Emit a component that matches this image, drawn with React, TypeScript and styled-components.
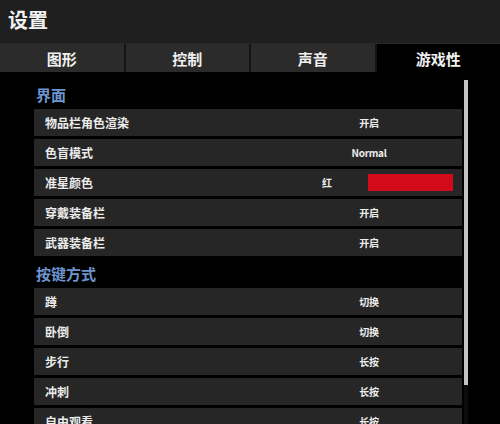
import React from "react";
import styled, { createGlobalStyle } from "styled-components";

const GlobalStyle = createGlobalStyle`
    html, body {
        margin: 0;
        padding: 0;
        background: #000000;
        overflow: hidden;
    }
    body {
        font-family: "Noto Sans CJK SC", "Liberation Sans", sans-serif;
    }
`;

const Page = styled.div`
    width: 500px;
    height: 424px;
    display: flex;
    flex-direction: column;
    background: #000000;
    overflow: hidden;
`;

const Header = styled.div`
    height: 43px;
    flex-shrink: 0;
    display: flex;
    align-items: center;
    padding: 0 0 4px 8px;
    background: #1f1f1f;
    color: #f2f2f2;
    font-size: 20px;
    font-weight: bold;
    box-sizing: border-box;
`;

const TabBar = styled.div`
    display: flex;
    flex-shrink: 0;
    height: 29px;
    background: #1f1f1f;
    border-top: 1px solid #2a2a2a;
    box-sizing: border-box;
`;

const Tab = styled.div<{ $active?: boolean }>`
    flex: 1;
    display: flex;
    align-items: center;
    justify-content: center;
    font-size: 15px;
    font-weight: bold;
    color: #f0f0f0;
    background: ${(p) => (p.$active ? "#000000" : "#2b2b2b")};
    border-right: 2px solid ${(p) => (p.$active ? "transparent" : "#141414")};
    &:last-child {
        border-right: none;
    }
`;

const Body = styled.div`
    flex: 1;
    min-height: 0;
    display: flex;
    align-items: flex-start;
    padding: 8px 0 0 34px;
    gap: 2px;
    overflow: hidden;
`;

const List = styled.div`
    width: 428px;
    display: flex;
    flex-direction: column;
`;

const SectionTitle = styled.div`
    height: 29px;
    flex-shrink: 0;
    display: flex;
    align-items: center;
    padding-left: 2px;
    font-size: 15px;
    font-weight: bold;
    color: #6f95cf;
`;

const Row = styled.div`
    height: 27px;
    margin-bottom: 3px;
    display: flex;
    align-items: center;
    background: #262626;
    padding-left: 11px;
    color: #ececec;
    flex-shrink: 0;
`;

const Label = styled.div`
    flex: 1;
    font-size: 12px;
    font-weight: bold;
`;

const Value = styled.div`
    width: 186px;
    text-align: center;
    font-size: 10px;
    font-weight: bold;
    letter-spacing: -0.3px;
`;

const ColorValue = styled.div`
    width: 186px;
    display: flex;
    align-items: center;
    font-size: 10px;
    font-weight: bold;
`;

const ColorName = styled.span`
    width: 80px;
    margin-left: 11px;
    text-align: center;
`;

const Swatch = styled.div<{ $color: string }>`
    width: 85px;
    height: 17px;
    margin-left: 1px;
    background: ${(p) => p.$color};
`;

const Track = styled.div`
    width: 4px;
    height: 344px;
    background: #0c0c0c;
    display: flex;
    flex-direction: column;
`;

const Thumb = styled.div`
    height: 305px;
    background: #c4c4c4;
`;

const tabs = ["图形", "控制", "声音", "游戏性"];

const ui = [
    { label: "物品栏角色渲染", value: "开启" },
    { label: "色盲模式", value: "Normal" },
    { label: "准星颜色", value: "红", color: "#d20a1a" },
    { label: "穿戴装备栏", value: "开启" },
    { label: "武器装备栏", value: "开启" },
];

const keys = [
    { label: "蹲", value: "切换" },
    { label: "卧倒", value: "切换" },
    { label: "步行", value: "长按" },
    { label: "冲刺", value: "长按" },
    { label: "自由观看", value: "长按" },
];

type Item = { label: string; value: string; color?: string };

const SettingRow: React.FC<{ item: Item }> = ({ item }) => (
    <Row>
        <Label>{item.label}</Label>
        {item.color ? (
            <ColorValue>
                <ColorName>{item.value}</ColorName>
                <Swatch $color={item.color} />
            </ColorValue>
        ) : (
            <Value>{item.value}</Value>
        )}
    </Row>
);

export default function App() {
    return (
        <Page>
            <GlobalStyle />
            <Header>设置</Header>
            <TabBar>
                {tabs.map((t, i) => (
                    <Tab key={t} $active={i === tabs.length - 1}>
                        {t}
                    </Tab>
                ))}
            </TabBar>
            <Body>
                <List>
                    <SectionTitle>界面</SectionTitle>
                    {ui.map((it) => (
                        <SettingRow key={it.label} item={it} />
                    ))}
                    <SectionTitle>按键方式</SectionTitle>
                    {keys.map((it) => (
                        <SettingRow key={it.label} item={it} />
                    ))}
                </List>
                <Track>
                    <Thumb />
                </Track>
            </Body>
        </Page>
    );
}
